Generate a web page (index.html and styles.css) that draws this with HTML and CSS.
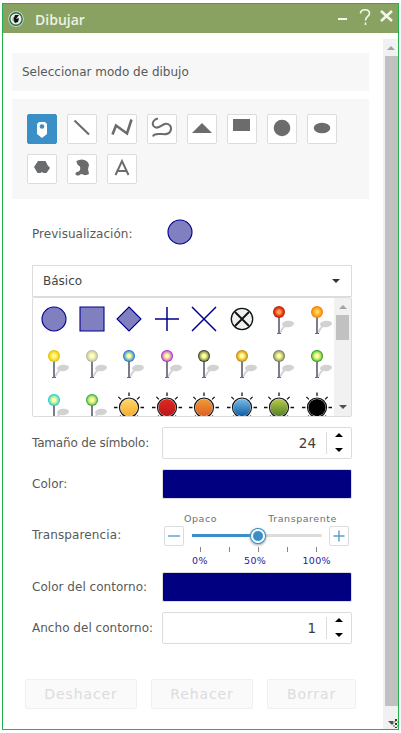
FILE: index.html
```html
<!DOCTYPE html>
<html lang="es">
<head>
<meta charset="utf-8">
<title>Dibujar</title>
<link rel="stylesheet" href="styles.css">
</head>
<body>
<main class="window">
  <header class="titlebar">
    <svg class="logo" width="16" height="16" viewBox="0 0 16 16"><circle cx="8" cy="8" r="7.7" fill="#e0e7dc"/><circle cx="8" cy="8" r="6.2" fill="#e9f0e9" stroke="#246747" stroke-width="1.4"/><path d="M7 4l4 0-3 4 3-1-1 4-3 1-2-3z" fill="#111"/><path d="M4.5 6.5l2-1-1 2 1 3-2-1z" fill="#88a988"/></svg>
    <h1>Dibujar</h1>
    <svg class="controls" width="60" height="26" viewBox="0 0 60 26" fill="none" stroke="#f4f7ee"><path d="M1 15h9" stroke-width="2"/><path d="M23.500 9.500c0-5 9-5 9 0 0 3-4 3-4 7M28.500 18.500v2.500" stroke-width="1.6"/><path d="M44 7l11 10M55 7L44 17" stroke-width="2.5"/></svg>
  </header>
  <div class="body">
    <div class="content">
      <section class="mode-title"><span>Seleccionar modo de dibujo</span></section>
      <section class="tools">
        <button class="tool selected"><svg viewBox="0 0 30 30"><path d="M12 8h6l2 2v10l-5 4-5-4V10z" fill="#fff"/><circle cx="15" cy="12.5" r="2.3" fill="#398fc6"/></svg></button>
        <button class="tool"><svg viewBox="0 0 30 30"><path class="line" d="M7.5 6.5l14.5 14"/></svg></button>
        <button class="tool"><svg viewBox="0 0 30 30"><path class="line thick" d="M5.5 20.5l3.5-9 11 8 4.5-14"/></svg></button>
        <button class="tool"><svg viewBox="0 0 30 30"><path class="line thin" d="M11 4.500C7 5 4.500 9 6.500 12c3 4 7 0 10-1.500 5-2.500 9 2 7 6.500-2 4.500-7 3-11 3-4-.2-6 .3-6.500 2.500"/></svg></button>
        <button class="tool"><svg viewBox="0 0 30 30"><path d="M5 19h20L15 9z"/></svg></button>
        <button class="tool"><svg viewBox="0 0 30 30"><path d="M6 5h17v12H6z"/></svg></button>
        <button class="tool"><svg viewBox="0 0 30 30"><circle cx="15" cy="14" r="8.3"/></svg></button>
        <button class="tool"><svg viewBox="0 0 30 30"><ellipse cx="15" cy="14" rx="8.3" ry="5.2"/></svg></button>
        <button class="tool"><svg viewBox="0 0 30 30"><path d="M11 7h7.500l2 4 2.500 3-3.500 5h-3l-1.500-1-1.500 1h-3L7 13z"/></svg></button>
        <button class="tool"><svg viewBox="0 0 30 30"><path d="M9.500 7q4-2.500 8-1 4 1.500 4.500 5l-1 4 1 5q-3 2-6 .5l-2-.5q-2 2-4 1.500-2-.5-1.500-2.500 1-1.500 3-1.500 2.500-1.500 1.500-5-3.500-2-3.500-5.500z"/></svg></button>
        <button class="tool"><svg viewBox="0 0 30 30"><path class="line letter" d="M8.500 21L15 7l6.500 14M10.500 17h9"/></svg></button>
      </section>
      <div class="row preview"><span class="label pv">Previsualización:</span><svg width="26" height="26"><circle cx="13" cy="13" r="12" class="sample"/></svg></div>
      <div class="select"><span>Básico</span><i class="arrow down"></i></div>
      <div class="list"><div class="symbols" id="symbols"></div><div class="list-scroll"><i class="arrow up grey"></i><div class="list-thumb"></div><i class="arrow down dark"></i></div></div>
      <div class="form">
        <div class="row number-row"><span class="label ts">Tamaño de símbolo:</span><div class="number"><span>24</span><div class="spin"><i class="arrow up"></i><i class="arrow down"></i></div></div></div>
        <div class="row"><span class="label co">Color:</span><div class="swatch"></div></div>
        <div class="row slider-row"><span class="label tr">Transparencia:</span>
          <div class="slider">
            <div class="ends"><span>Opaco</span><span>Transparente</span></div>
            <div class="track-row">
              <button class="step"><svg viewBox="0 0 18 18"><path d="M3 9h12"/></svg></button>
              <div class="track"><div class="fill"></div><div class="knob"></div></div>
              <button class="step"><svg viewBox="0 0 18 18"><path d="M3.500 9h11M9 3.500v11"/></svg></button>
            </div>
            <div class="ticks"><i></i><i></i><i></i><i></i><i></i></div>
            <div class="percents"><span>0%</span><span>50%</span><span>100%</span></div>
          </div>
        </div>
        <div class="row outline-row"><span class="label cc">Color del contorno:</span><div class="swatch"></div></div>
        <div class="row number-row"><span class="label ac">Ancho del contorno:</span><div class="number"><span>1</span><div class="spin"><i class="arrow up"></i><i class="arrow down"></i></div></div></div>
      </div>
      <footer class="actions"><button class="undo">Deshacer</button><button class="redo">Rehacer</button><button class="clear">Borrar</button></footer>
    </div>
    <div class="scroll"><i class="arrow up grey"></i><div class="thumb"></div><div class="scroll-end"><i class="arrow down dark"></i><i class="grip"></i></div></div>
  </div>
</main>
<script src="script.js"></script>
</body>
</html>
```
FILE: styles.css
```css
* { box-sizing: border-box; }
body { margin: 0; background: #fff; font-family: "DejaVu Sans", Verdana, sans-serif; font-size: 12px; color: #595959; }
.window { width: 397px; height: 727px; margin: 3px 0 0 2px; border: 1px solid #22b14c; display: flex; flex-direction: column; overflow: hidden; }
.titlebar { height: 29px; flex: none; background: #8aa261; display: flex; align-items: center; padding: 0 1px 0 5px; color: #eef3e5; }
.logo { margin-top: 1px; }
h1 { font: 600 14px "Open Sans", sans-serif; margin: 1px 0 0 11px; flex: 1; }
.controls { align-self: flex-start; }
.body { flex: 1; display: flex; min-height: 0; }
.content { width: 380px; padding: 20px 0 0 9px; }
.mode-title { width: 357px; height: 38px; background: #f7f7f7; display: flex; align-items: center; padding: 0 0 1px 10px; white-space: nowrap; }
.tools { width: 357px; height: 100px; background: #f7f7f7; margin-top: 8px; padding: 15px; display: flex; flex-wrap: wrap; gap: 10px; align-content: flex-start; }
button { font-family: inherit; padding: 0; margin: 0; }
.tool { width: 30px; height: 30px; background: #fff; border: 1px solid #dcdcdc; border-radius: 2px; display: flex; }
.tool svg { width: 30px; height: 30px; margin: -1px; flex: none; fill: #6b6c6d; }
.tool.selected { background: #398fc6; border-color: #398fc6; }
.tool .line { fill: none; stroke: #6b6c6d; stroke-width: 2.1; }
.tool .thick { stroke-width: 2.6; }
.tool .thin { stroke-width: 2; }
.tool .letter { stroke-width: 2; }
.row { display: flex; align-items: center; height: 30px; }
.label { width: 130px; flex: none; white-space: nowrap; letter-spacing: .03px; }
.ts { letter-spacing: -.18px; }
.tr { letter-spacing: .12px; }
.preview { height: 66px; margin-left: 20px; }
.preview .label { padding-top: 3px; }
.preview svg { margin-left: 5px; }
.sample { fill: #8080c0; stroke: #00008c; stroke-width: 1.1; }
.select { width: 320px; height: 32px; margin-left: 20px; border: 1px solid #dcdcdc; display: flex; align-items: center; justify-content: space-between; padding: 0 11px 1px 10px; color: #444; }
.arrow { width: 0; height: 0; display: block; border-left: 4px solid transparent; border-right: 4px solid transparent; }
.up { border-bottom: 4px solid #000; }
.down { border-top: 4px solid #000; }
.grey { border-bottom-color: #a3a3a3; }
.dark { border-top-color: #505050; }
.select .arrow { border-top-color: #333; }
.list { width: 320px; height: 120px; margin-left: 20px; border: 1px solid #dcdcdc; border-radius: 2px; display: flex; overflow: hidden; }
.symbols { width: 301px; padding-left: 2px; margin-top: -1px; display: grid; grid-template-columns: repeat(8, 37.5px); grid-auto-rows: 44px; overflow: hidden; }
.symbols svg { width: 38px; height: 44px; overflow: visible; }
.list-scroll { width: 17px; background: #f1f1f1; display: flex; flex-direction: column; align-items: center; padding: 7px 0; }
.list-thumb { width: 13px; height: 25px; background: #c1c1c1; margin: 6px 0 auto; }
.form { margin: 10px 0 0 20px; }
.number-row { height: 32px; }
.number { width: 190px; height: 32px; border: 1px solid #dcdcdc; border-radius: 2px; display: flex; justify-content: flex-end; align-items: center; font-size: 13.5px; color: #3c3c3c; }
.number span { margin-right: 10px; }
.spin { height: 22px; width: 25px; border-left: 1px solid #dcdcdc; display: flex; flex-direction: column; align-items: center; justify-content: space-between; padding: 1px 0 2px; }
.number-row + .row { margin-top: 10px; }
.swatch { width: 190px; height: 30px; border: 1px solid #dcdcdc; border-radius: 2px; background: #000080; }
.slider-row { height: 73px; align-items: flex-start; }
.slider-row .label { padding-top: 29px; }
.slider { width: 190px; padding: 13px 3px 0 2px; }
.ends { display: flex; justify-content: space-between; padding: 0 12px 0 20px; font-size: 9.5px; line-height: 14px; color: #707070; letter-spacing: .55px; }
.track-row { display: flex; justify-content: space-between; align-items: center; height: 20px; }
.step { width: 20px; height: 20px; border: 1px solid #dcdcdc; border-radius: 2px; background: #fff; }
.step svg { width: 18px; height: 18px; display: block; fill: none; stroke: #55a0d0; stroke-width: 1.4; }
.track { width: 130px; height: 3px; border-radius: 2px; background: #dcdcdc; margin-top: -1px; display: flex; align-items: center; }
.fill { width: 66px; height: 3px; background: #398fc6; flex: none; }
.knob { width: 12px; height: 12px; margin-left: -6px; border-radius: 50%; background: #398fc6; border: 1px solid #fff; box-shadow: 0 0 0 1px #fff, 0 0 0 2px #398fc6, 0 1px 3px 2px #999; flex: none; }
.ticks { display: flex; justify-content: space-between; width: 117px; margin: 1px 0 0 36px; }
.ticks i { width: 1px; height: 5px; background: #858585; }
.percents { width: 139px; margin: 2px 0 0 28px; display: flex; justify-content: space-between; font-size: 9.5px; line-height: 14px; color: #1b1b9b; letter-spacing: .35px; }
.outline-row { margin-bottom: 10px; }
.outline-row .label { padding-bottom: 1px; }
.actions { display: flex; gap: 14px; margin: 35px 0 0 13px; }
.actions button { height: 30px; border: 1px solid #f0f0f0; border-radius: 2px; background: #fafafa; color: #dcdcdc; font-size: 14px; letter-spacing: .9px; }
.undo { width: 112px; }
.redo { width: 102px; }
.clear { width: 89px; }
.scroll { width: 15px; margin-top: 6px; background: #f1f1f1; display: flex; flex-direction: column; align-items: center; padding-top: 7px; }
.thumb { width: 13px; height: 650px; background: #c1c1c1; margin: 6px 0 0 2px; }
.scroll-end { flex: 1; align-self: stretch; display: flex; align-items: flex-end; padding: 0 0 1px 5px; }
.scroll-end .arrow { margin-bottom: 3px; }
.grip { width: 7px; height: 9px; margin-left: -3px; background: conic-gradient(#333 25%, transparent 0 50%, #aaa 0 75%, transparent 0) 0 0 / 4px 4px; }
```
FILE: script.js
```js
const basic = [
  '<circle class="sample" cx="19" cy="22" r="12"/>',
  '<path class="sample" d="M7 10h24v24H7z"/>',
  '<path class="sample" d="M19 10l12 12-12 12L7 22z"/>',
  '<path d="M7 22h24M19 10v24" stroke="#00008c" stroke-width="1.5"/>',
  '<path d="M7 10l24 24M31 10L7 34" stroke="#00008c" stroke-width="1.5"/>',
  '<circle cx="19" cy="22" r="10.700" fill="#eef1f1" stroke="#111" stroke-width="1.3"/><path d="M12 15l14 14M26 15L12 29" stroke="#111" stroke-width="1.900"/>'
];
const pins = [
  ['#ffa252', '#e03212', '#c41c08'], ['#ffd35e', '#ff9d18', '#ef7d09'],
  ['#fff98e', '#f6dc25', '#dfb600'], ['#ffffc4', '#dbdda0', '#aaa'],
  ['#ffff9f', '#73b8bd', '#145fe5'], ['#ffff9f', '#d891bc', '#9d15e3'],
  ['#ffffa0', '#a4ab54', '#1c2115'], ['#ffff9f', '#e3bc38', '#bd7b00'],
  ['#ffff9f', '#b8bc6c', '#666d61'], ['#ffffa3', '#a3dc5a', '#078c05'],
  ['#ffffa0', '#8fe3ae', '#05bfdf'], ['#ffffa0', '#a2dc6d', '#159b25']
];
const suns = [['#ffd66b', '#f7ad2c'], ['#df281e', '#bc171d'], ['#ef9b34', '#dc5f27'], ['#78bce6', '#0d5da5'], ['#b5cb48', '#547f2b'], ['#000', '#000']];

function pin([light, mid, edge], i) {
  return `<defs><radialGradient id="p${i}"><stop stop-color="${light}"/><stop offset=".25" stop-color="${light}"/><stop offset=".7" stop-color="${mid}"/><stop offset="1" stop-color="${edge}"/></radialGradient></defs>
  <path d="M20 36Q22 31 26 28" fill="none" stroke="#d4d4d4" stroke-width="2"/><ellipse cx="28" cy="27" rx="6" ry="3.2" fill="#d2d2d2" transform="rotate(-8 28 27)"/>
  <path d="M19 20v17" stroke="#747887" stroke-width="1.900"/><path d="M17 36.500h4" stroke="#666a74" stroke-width="1.200"/><circle cx="19" cy="15" r="6" fill="url(#p${i})"/>`;
}

function sun([top, bottom], i) {
  const rays = Array.from({ length: 8 }, (_, n) => `<path d="M19 11V7.500" transform="rotate(${n * 45} 19 22.500)"/>`).join('');
  return `<defs><linearGradient id="s${i}" x2="0" y2="1"><stop stop-color="${top}"/><stop offset="1" stop-color="${bottom}"/></linearGradient></defs>
  <g stroke="#111" stroke-width="1.300">${rays}</g><circle cx="19" cy="22.500" r="9.500" fill="#eee" stroke="#111" stroke-width="1.200"/><circle cx="19" cy="22.500" r="8.600" fill="url(#s${i})"/>`;
}

document.getElementById('symbols').innerHTML = [...basic, ...pins.map(pin), ...suns.map(sun)]
  .map(shape => `<svg viewBox="0 0 38 44">${shape}</svg>`).join('');
```
